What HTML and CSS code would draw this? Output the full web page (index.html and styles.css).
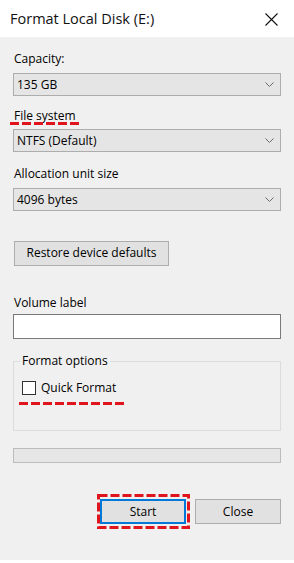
FILE: index.html
```html
<!DOCTYPE html>
<html>
<head>
<meta charset="utf-8">
<link rel="stylesheet" href="styles.css">
</head>
<body>
<div class="dialog">
  <div class="titlebar">
    <span class="title">Format Local Disk (E:)</span>
    <svg class="close-x" width="13" height="13" viewBox="0 0 13 13"><path d="M0.5 0.5 L12.5 12.5 M12.5 0.5 L0.5 12.5" stroke="#111" stroke-width="1.1" fill="none"/></svg>
  </div>
  <div class="content">
    <div class="label l1">Capacity:</div>
    <div class="combo"><span>135 GB</span><svg class="chev" width="9" height="5" viewBox="0 0 9 5"><path d="M0.5 0.5 L4.5 4.5 L8.5 0.5" stroke="#6b6b6b" fill="none" stroke-width="1"/></svg></div>

    <div class="label l2"><span class="mark">File system</span></div>
    <div class="combo c2"><span>NTFS (Default)</span><svg class="chev" width="9" height="5" viewBox="0 0 9 5"><path d="M0.5 0.5 L4.5 4.5 L8.5 0.5" stroke="#6b6b6b" fill="none" stroke-width="1"/></svg></div>

    <div class="label l3">Allocation unit size</div>
    <div class="combo c3"><span>4096 bytes</span><svg class="chev" width="9" height="5" viewBox="0 0 9 5"><path d="M0.5 0.5 L4.5 4.5 L8.5 0.5" stroke="#6b6b6b" fill="none" stroke-width="1"/></svg></div>

    <div class="btn restore">Restore device defaults</div>

    <div class="label vol">Volume label</div>
    <div class="textbox"></div>

    <fieldset class="group">
      <legend>Format options</legend>
      <div class="check-row">
        <span class="checkbox"></span>
        <span>Quick Format</span>
        <span class="check-mark"></span>
      </div>
    </fieldset>

    <div class="progress"></div>

    <div class="actions">
      <div class="btn primary">Start
        <svg class="ring" width="93" height="35" viewBox="0 0 93 35"><rect x="1.5" y="1.5" width="90" height="32" fill="none" stroke="#e0141c" stroke-width="3" stroke-dasharray="9 3"/></svg>
      </div>
      <div class="btn">Close</div>
    </div>
  </div>
</div>
</body>
</html>
```
FILE: styles.css
```css
* { box-sizing: border-box; }
html, body { margin: 0; padding: 0; }
body {
  width: 294px;
  height: 563px;
  background: #ffffff;
  font-family: "Open Sans", "Noto Sans", sans-serif;
  font-size: 12px;
  color: #000;
  overflow: hidden;
}
.dialog { display: flex; flex-direction: column; height: 563px; }
.titlebar {
  height: 37px;
  display: flex;
  align-items: center;
  justify-content: space-between;
  padding: 1px 16px 0 10px;
  background: #fff;
}
.title { font-size: 14.5px; line-height: 20px; color: #111; }
.close-x { margin-top: 1px; }
.content {
  background: #f0f0f0;
  height: 523px;
  padding: 0 13px;
  display: flex;
  flex-direction: column;
}
.label { line-height: 16px; height: 16px; margin: 0 0 0 1px; }
.label.l1 { margin-top: 14px; margin-bottom: 6px; }
.label.l2 { margin-top: 12px; margin-bottom: 5px; }
.label.l3 { margin-top: 14px; margin-bottom: 6px; }
.combo {
  height: 23px;
  border: 1px solid #adadad;
  background: #e5e5e5;
  display: flex;
  align-items: center;
  justify-content: space-between;
  padding: 0 6px 0 3px;
  line-height: 16px;
}
.mark { position: relative; }
.mark::after {
  content: "";
  position: absolute;
  left: -4px;
  top: 15px;
  width: 69px;
  height: 3px;
  background: repeating-linear-gradient(to right, #e0141c 0 9px, transparent 9px 12px);
}
.btn {
  height: 25px;
  border: 1px solid #adadad;
  background: #e1e1e1;
  display: flex;
  align-items: center;
  justify-content: center;
  line-height: 16px;
}
.restore { width: 155px; margin: 30px 0 0 1px; padding-bottom: 1px; }
.label.vol { margin-top: 29px; margin-bottom: 3px; }
.textbox {
  height: 25px;
  border: 1px solid #7a7a7a;
  background: #fff;
}
.group {
  margin: 14px 0 0 0;
  padding: 11px 8px 34px 8px;
  border: 1px solid #dcdcdc;
  min-width: 0;
}
.group legend {
  padding: 0 2px;
  margin-left: -2px;
  line-height: 16px;
}
.check-row {
  position: relative;
  display: flex;
  align-items: center;
  gap: 5px;
  line-height: 16px;
  height: 16px;
}
.checkbox {
  width: 14px;
  height: 14px;
  border: 1px solid #333;
  background: #fff;
}
.check-mark {
  position: absolute;
  left: -3px;
  top: 22px;
  width: 105px;
  height: 3px;
  background: repeating-linear-gradient(to right, #e0141c 0 9px, transparent 9px 12px);
}
.progress {
  margin-top: 17px;
  height: 15px;
  border: 1px solid #bcbcbc;
  background: #e6e6e6;
}
.actions {
  margin-top: 36px;
  display: flex;
  justify-content: flex-end;
  gap: 9px;
}
.actions .btn { width: 86px; }
.btn.primary {
  position: relative;
  border: 2px solid #0078d7;
}
.ring {
  position: absolute;
  left: -5px;
  top: -7px;
}
```
